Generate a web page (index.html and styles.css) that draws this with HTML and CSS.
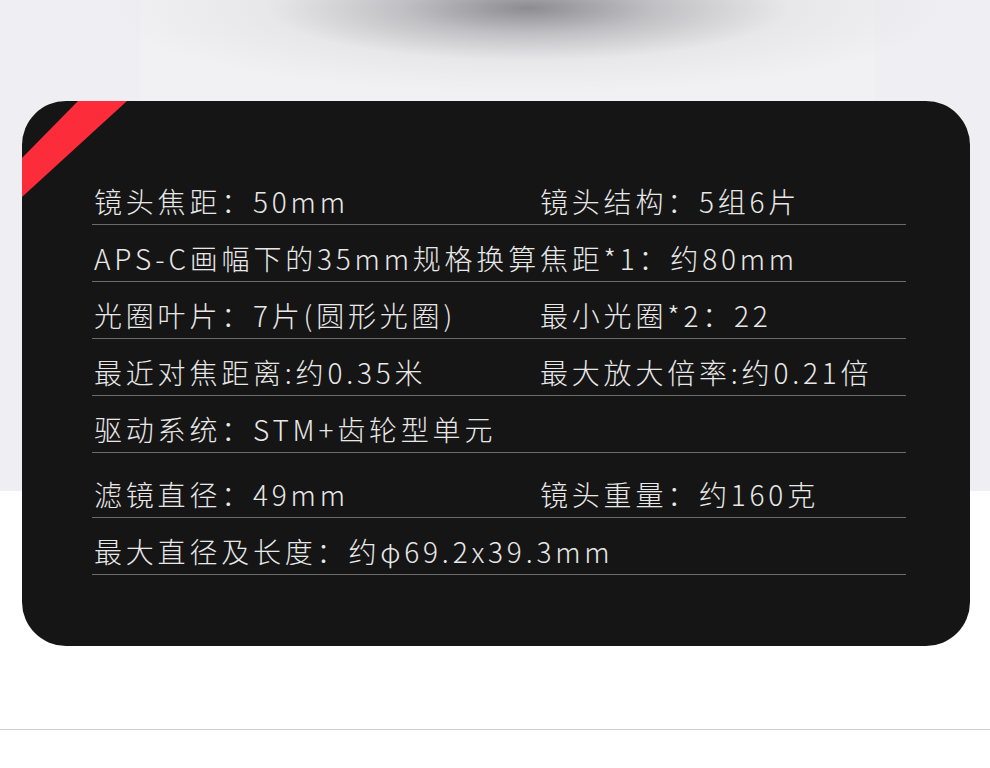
FILE: index.html
```html
<!DOCTYPE html>
<html lang="zh-CN">
<head>
    <meta charset="UTF-8">
    <meta name="viewport" content="width=device-width, initial-scale=1.0">
    <title>镜头规格</title>
    <link rel="stylesheet" href="styles.css">
</head>
<body>
    <div class="hero"></div>

    <div class="spec-card">
        <svg class="ribbon" width="130" height="110" viewBox="0 0 130 110">
            <polygon points="56,0 105,0 0,96 0,57" fill="#fc2c3a"/>
        </svg>

        <div class="spec-row">
            <span>镜头焦距：50mm</span>
            <span>镜头结构：5组6片</span>
        </div>
        <div class="spec-row">
            <span>APS-C画幅下的35mm规格换算焦距*1：约80mm</span>
        </div>
        <div class="spec-row">
            <span>光圈叶片：7片(圆形光圈)</span>
            <span>最小光圈*2：22</span>
        </div>
        <div class="spec-row">
            <span>最近对焦距离:约0.35米</span>
            <span>最大放大倍率:约0.21倍</span>
        </div>
        <div class="spec-row">
            <span>驱动系统：STM+齿轮型单元</span>
        </div>
        <div class="spec-row spaced">
            <span>滤镜直径：49mm</span>
            <span>镜头重量：约160克</span>
        </div>
        <div class="spec-row">
            <span>最大直径及长度：约φ69.2x39.3mm</span>
        </div>
    </div>

    <hr class="divider">
</body>
</html>
```

FILE: styles.css
```css
* {
    margin: 0;
    padding: 0;
    box-sizing: border-box;
}

body {
    font-family: "Noto Sans CJK SC", "Noto Sans", sans-serif;
    background: linear-gradient(#efeff3 0, #efeff3 491px, #fff 491px);
    min-height: 768px;
    overflow: hidden;
}

/* blurred product shadow at the very top */
.hero {
    height: 101px;
    background:
        radial-gradient(ellipse 420px 85px at 528px 8px, rgba(130, 130, 134, 0.9) 0, rgba(160, 160, 164, 0.6) 30%, rgba(210, 210, 214, 0.3) 62%, rgba(239, 239, 243, 0) 100%),
        linear-gradient(90deg, transparent 140px, rgba(255, 255, 255, 0.12) 140px, rgba(255, 255, 255, 0.12) 875px, transparent 875px);
}

.spec-card {
    position: relative;
    width: 948px;
    margin-left: 22px;
    padding: 67px 64px 71px 70px;
    background-color: #151515;
    border-radius: 44px;
    overflow: hidden;
    color: #e8e8e8;
}

.ribbon {
    position: absolute;
    top: 0;
    left: 0;
}

.spec-row {
    display: grid;
    grid-template-columns: 446px 1fr;
    padding: 16px 0 6px 2px;
    border-bottom: 1px solid #6a6a6a;
    font-size: 28px;
    font-weight: 300;
    line-height: 34px;
    letter-spacing: 3.8px;
    white-space: nowrap;
}

.spec-row.spaced {
    margin-top: 8px;
}

.divider {
    margin-top: 83px;
    border: none;
    border-top: 1px solid #cfcfcf;
}
```
